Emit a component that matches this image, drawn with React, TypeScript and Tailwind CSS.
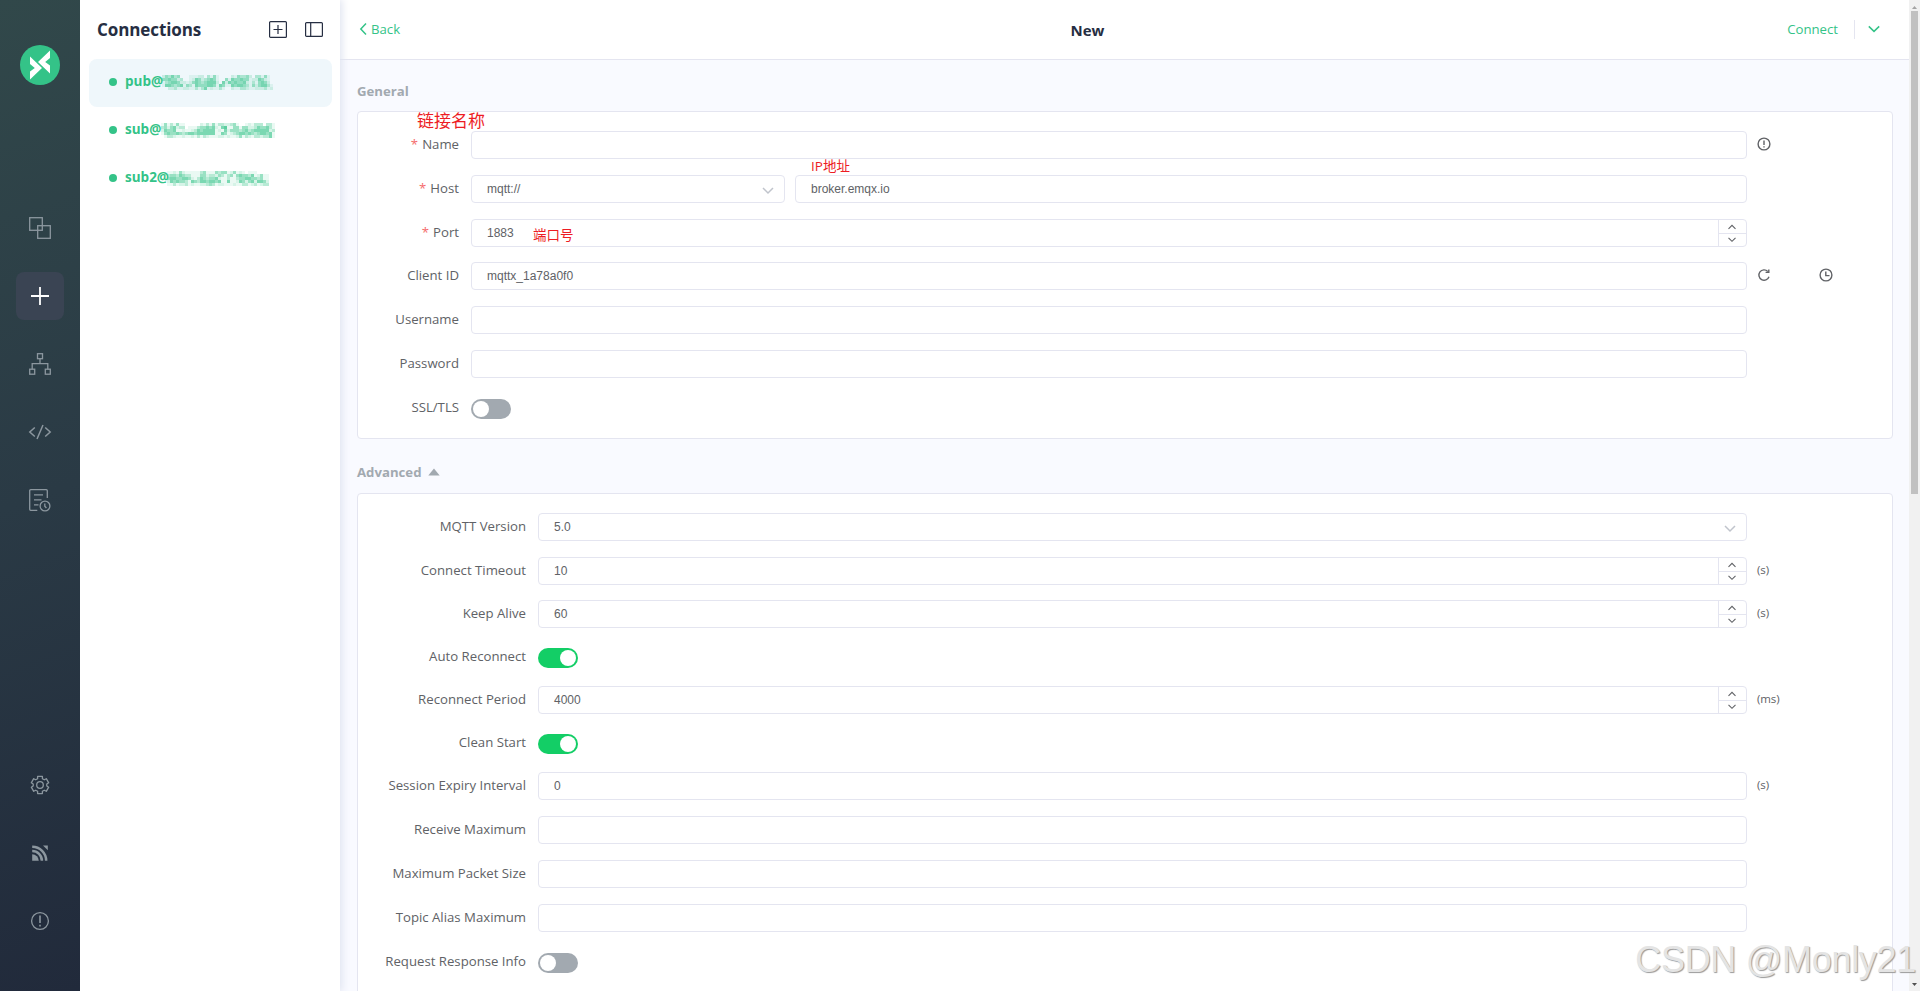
import React, { ReactNode } from 'react';

const UI_FONT = "font-['Open_Sans','Noto_Sans_CJK_SC',sans-serif]";
const INPUT_FONT = "font-['Liberation_Sans',Arial,sans-serif]";

// Each digit is one 3px block, 0 = empty, 5 = strongest
const connections = [
  {
    name: 'pub@',
    width: 'w-[37px]',
    blocks: [
      '2435340001112203141000021433420331410',
      '4454423001254234541004154454412254210',
      '1345542212454345552052545445213145420',
      '1554345143154445541541154554314245531',
      '0022311221131351211310021133211222312',
    ],
  },
  {
    name: 'sub@',
    width: 'w-[36px]',
    blocks: [
      '14131411000002131413322341001213330331',
      '34245233011134454521561144144223544531',
      '25445112112354555512152444345345555523',
      '14544543455455555511541234554543455451',
      '01332112112131321112212112413213323351',
    ],
  },
  {
    name: 'sub2@',
    width: 'w-[42px]',
    blocks: [
      '1121421111134111434412412101110000',
      '3443543311144233243134145443512411',
      '4554455421354344521131134455443411',
      '2545443154355455451151125424525542',
      '1131223121122343122111211331231233',
    ],
  },
];

const shades = ['', 'fill-[#34c388]/10', 'fill-[#34c388]/20', 'fill-[#34c388]/35', 'fill-[#34c388]/50', 'fill-[#34c388]/65', 'fill-[#34c388]/80'];

function Mosaic({ blocks }: { blocks: string[] }) {
  return (
    <svg width={blocks[0].length * 3} height="15" shapeRendering="crispEdges">
      {blocks.map((row, y) =>
        row.split('').map((v, x) =>
          v === '0' ? null : <rect key={`${x}-${y}`} x={x * 3} y={y * 3} width="3" height="3" className={shades[Number(v)]} />
        )
      )}
    </svg>
  );
}

function NavItem({ active, children }: { active?: boolean; children: ReactNode }) {
  return (
    <div
      className={`flex size-12 items-center justify-center rounded-lg ${
        active ? 'bg-[#3a4453] text-white' : 'text-[#8c979f]'
      }`}
    >
      <svg width="24" height="24" viewBox="0 0 24 24" fill="none" stroke="currentColor" strokeWidth="1.3">
        {children}
      </svg>
    </div>
  );
}

function Sidebar() {
  return (
    <div className="relative z-20 flex w-20 shrink-0 flex-col items-center bg-[linear-gradient(160deg,#31484a_0%,#2a3a45_50%,#212a3b_100%)] pt-[45px] pb-[46px]">
      <svg width="40" height="40" viewBox="0 0 40 40">
        <circle cx="20" cy="20" r="20" fill="#34c388" />
        <path d="M10 11.5 L22 23 L10 34.5 V26.5 L14.8 23 L10 19 Z" fill="#fff" />
        <path d="M30 5.5 L18 17 L30 28.5 V20.5 L25.2 17 L30 13 Z" fill="#fff" />
      </svg>

      <div className="mt-[119px] flex flex-col gap-5">
        <NavItem>
          <rect x="1.7" y="1.7" width="12.6" height="12.6" />
          <rect x="9.7" y="9.7" width="12.6" height="12.6" />
        </NavItem>
        <NavItem active>
          <path d="M12 3v18M3 12h18" strokeWidth="1.8" />
        </NavItem>
        <NavItem>
          <rect x="9.5" y="1.7" width="5" height="5" />
          <rect x="1.7" y="17.2" width="5" height="5" />
          <rect x="17.3" y="17.2" width="5" height="5" />
          <path d="M12 6.7v5M4.2 17.2v-5.5h15.6v5.5" />
        </NavItem>
        <NavItem>
          <path d="M6.8 7.5 L1.8 12 L6.8 16.5 M17.2 7.5 L22.2 12 L17.2 16.5 M15 5 L9 19" strokeWidth="1.5" />
        </NavItem>
        <NavItem>
          <path d="M9.3 22.3H2.7a1 1 0 0 1-1-1V2.7a1 1 0 0 1 1-1h15.6a1 1 0 0 1 1 1V10" />
          <path d="M6 6.8h9M6 11.8h7.5M6 16.8h4.5" />
          <circle cx="17" cy="18" r="4.9" />
          <path d="M16.8 15.5v2.7l1.6 1.8" />
        </NavItem>
      </div>

      <div className="mt-auto flex flex-col gap-5">
        <NavItem>
          <path d="M9.6 3.4h4.8v2.3l1.9 1.1 2-1.1 2.4 4.1-1.9 1.2v2l1.9 1.2-2.4 4.1-2-1.1-1.9 1.1v2.3H9.6v-2.3l-1.9-1.1-2 1.1-2.4-4.1L5.2 13v-2L3.3 9.8l2.4-4.1 2 1.1 1.9-1.1z" strokeLinejoin="round" />
          <circle cx="12" cy="12" r="3.3" />
        </NavItem>
        <NavItem>
          <path d="M4.2 13.2a6.6 6.6 0 0 1 6.6 6.6H4.2z" fill="currentColor" stroke="none" />
          <path d="M4.2 10.1a9.7 9.7 0 0 1 9.7 9.7M4.2 5.8a14 14 0 0 1 14 14" strokeWidth="2.5" />
          <path d="M15 4.4h4.8v4.8z" fill="currentColor" stroke="none" />
        </NavItem>
        <NavItem>
          <circle cx="12" cy="12" r="8.4" />
          <path d="M12 6.5v7.5M12 15.8v1.7" strokeWidth="1.6" />
        </NavItem>
      </div>
    </div>
  );
}

function ConnectionList() {
  return (
    <div className="z-10 w-[260px] shrink-0 bg-white shadow-[1px_0_8px_1px_#dfe3f0]">
      <div className="flex h-[59px] items-center pl-[17px] pr-[17px] text-[#262e42]">
        <h1 className="text-[17px] font-bold tracking-[-0.1px]">Connections</h1>
        <svg className="ml-auto" width="18" height="17" fill="none" stroke="currentColor" strokeWidth="1.2">
          <rect x="0.6" y="0.6" width="16.8" height="15.8" rx="1" />
          <path d="M9 4v9M4.5 8.5h9" />
        </svg>
        <svg className="ml-[18px]" width="18" height="15" fill="none" stroke="currentColor" strokeWidth="1.2">
          <rect x="0.6" y="0.6" width="16.8" height="13.8" rx="1" />
          <path d="M5.7 1v13" />
        </svg>
      </div>
      {connections.map((c, i) => (
        <div key={c.name} className={`ml-[9px] flex h-12 w-[243px] items-center rounded-lg pb-[2px] pl-5 ${i === 0 ? 'bg-[#eff7fb]' : ''}`}>
          <span className="size-2 rounded-full bg-[#34c388]" />
          <span className={`ml-2 whitespace-nowrap pb-[2px] text-[13.5px] font-bold leading-5 text-[#34c388] ${c.width}`}>{c.name}</span>
          <Mosaic blocks={c.blocks} />
        </div>
      ))}
    </div>
  );
}

function Chevron({ className, d, thin }: { className?: string; d: string; thin?: boolean }) {
  return (
    <svg className={className} width="14" height="14" viewBox="0 0 14 14" fill="none" stroke="currentColor" strokeWidth={thin ? 1.1 : 1.5}>
      <path d={d} />
    </svg>
  );
}

function Input({ value, spinner, select, className = 'flex-1' }: { value?: string; spinner?: boolean; select?: boolean; className?: string }) {
  return (
    <div className={`flex h-7 rounded border border-[#e4e5f0] bg-white ${className}`}>
      <span className={`flex-1 pl-[15px] text-[12px] leading-[26px] text-[#606266] ${INPUT_FONT}`}>{value}</span>
      {select && <Chevron className="mt-[8px] mr-[9px] text-[#c0c4cc]" d="M2 4l5 5 5-5" />}
      {spinner && (
        <span className="flex w-[28px] flex-col border-l border-[#e4e5f0] pr-px text-[#606266]">
          <span className="-mr-px flex h-[14px] items-center justify-center border-b border-[#e4e5f0] pr-px">
            <Chevron thin d="M3.5 8.8L7 5.3 10.5 8.8" />
          </span>
          <span className="flex h-3 items-center justify-center">
            <Chevron thin d="M3.5 4.8L7 8.3 10.5 4.8" />
          </span>
        </span>
      )}
    </div>
  );
}

function Switch({ on }: { on?: boolean }) {
  return (
    <div className={`mt-[5px] flex h-5 w-10 items-center rounded-full px-[2px] ${on ? 'justify-end bg-[#13ce66]' : 'bg-[#a2a9b0]'}`}>
      <span className="size-4 rounded-full bg-white" />
    </div>
  );
}

type RowProps = { label: string; required?: boolean; short?: boolean; wide?: boolean; suffix?: ReactNode; children: ReactNode };

function Row({ label, required, short, wide, suffix, children }: RowProps) {
  return (
    <div className={`flex items-start ${short ? 'h-[43px]' : 'h-11'}`}>
      <label className={`shrink-0 whitespace-nowrap pr-3 text-right text-[13.2px] leading-[27px] text-[#606266] ${wide ? 'w-[180px]' : 'w-[113px]'}`}>
        {required && <span className="mr-1 text-[#f56c6c]">*</span>}
        {label}
      </label>
      <div className="flex flex-1">{children}</div>
      <div className="flex h-[25px] w-[145px] shrink-0 items-center pl-[10px] text-[11.5px] tracking-[-0.1px] text-[#606266]">{suffix}</div>
    </div>
  );
}

const iconProps = { width: 14, height: 14, viewBox: '0 0 14 14', fill: 'none', stroke: '#606266', strokeWidth: 1.4 };

function GeneralCard() {
  return (
    <div className="relative h-[328px] rounded border border-[#e4e5f0] bg-white pt-[19px]">
      <Row
        label="Name"
        required
        suffix={
          <svg {...iconProps}>
            <circle cx="7" cy="7" r="5.9" />
            <path d="M7 3.5v4.5M7 9.2v1.3" />
          </svg>
        }
      >
        <Input />
      </Row>
      <Row label="Host" required>
        <Input value="mqtt://" select className="w-[314px]" />
        <Input value="broker.emqx.io" className="ml-[10px] flex-1" />
      </Row>
      <Row label="Port" required short>
        <Input value="1883" spinner />
      </Row>
      <Row
        label="Client ID"
        suffix={
          <>
            <svg {...iconProps}>
              <path d="M12 8.8A5.2 5.2 0 1 1 10.8 3.4" />
              <path d="M8.6 4.4h3.2V1.5" />
            </svg>
            <svg {...iconProps} className="ml-[48px]">
              <circle cx="7" cy="7" r="5.9" />
              <path d="M6.8 3.6v4h3.7" />
            </svg>
          </>
        }
      >
        <Input value="mqttx_1a78a0f0" />
      </Row>
      <Row label="Username">
        <Input />
      </Row>
      <Row label="Password">
        <Input />
      </Row>
      <Row label="SSL/TLS">
        <Switch />
      </Row>

      {/* Red hints written over the form */}
      <span className="absolute left-[59px] top-[-3px] text-[17px] leading-6 text-[#ed1c24]">链接名称</span>
      <span className="absolute left-[453px] top-[44px] text-[13.5px] leading-5 text-[#ed1c24]">IP地址</span>
      <span className="absolute left-[175px] top-[113px] text-[13.5px] leading-5 text-[#ed1c24]">端口号</span>
    </div>
  );
}

function AdvancedCard() {
  return (
    <div className="h-[600px] rounded border border-[#e4e5f0] bg-white pt-[19px]">
      <Row wide label="MQTT Version">
        <Input value="5.0" select />
      </Row>
      <Row wide short label="Connect Timeout" suffix="(s)">
        <Input value="10" spinner />
      </Row>
      <Row wide short label="Keep Alive" suffix="(s)">
        <Input value="60" spinner />
      </Row>
      <Row wide short label="Auto Reconnect">
        <Switch on />
      </Row>
      <Row wide short label="Reconnect Period" suffix="(ms)">
        <Input value="4000" spinner />
      </Row>
      <Row wide short label="Clean Start">
        <Switch on />
      </Row>
      <Row wide label="Session Expiry Interval" suffix="(s)">
        <Input value="0" />
      </Row>
      <Row wide label="Receive Maximum">
        <Input />
      </Row>
      <Row wide label="Maximum Packet Size">
        <Input />
      </Row>
      <Row wide label="Topic Alias Maximum">
        <Input />
      </Row>
      <Row wide label="Request Response Info">
        <Switch />
      </Row>
    </div>
  );
}

function Header() {
  return (
    <div className="flex h-[60px] shrink-0 items-center border-b border-[#e4e5f0] bg-white text-[13.2px] text-[#34c388]">
      <div className="flex flex-1 items-center pl-[17px]">
        <Chevron d="M9 1.5L3.8 7 9 12.5" />
        <span className="pt-px">Back</span>
      </div>
      <h2 className="pr-[63px] pt-px text-[15px] font-bold text-[#262e42]">New</h2>
      <div className="flex flex-1 items-center justify-end pr-[28px]">
        <span className="pt-px">Connect</span>
        <span className="ml-4 h-[19px] w-px bg-[#e4e5f0]" />
        <Chevron className="ml-[12px]" d="M1.8 4.4L7 9.4 12.2 4.4" />
      </div>
    </div>
  );
}

function Scrollbar() {
  return (
    <div className="flex w-[11px] shrink-0 flex-col items-center bg-[#f1f1f1]">
      <div className="flex h-[11px] items-center">
        <svg width="5" height="3" className="mt-[3px]">
          <path d="M0 3L2.5 0 5 3z" fill="#a3a3a3" />
        </svg>
      </div>
      <div className="h-[483px] w-[7px] bg-[#c1c1c1]" />
      <svg width="5" height="3" className="mt-auto mb-[5px]">
        <path d="M0 0h5L2.5 3z" fill="#505050" />
      </svg>
    </div>
  );
}

export default function App() {
  return (
    <div className={`relative flex h-screen w-full overflow-hidden bg-[#f9faff] ${UI_FONT}`}>
      <Sidebar />
      <ConnectionList />
      <div className="flex min-w-0 flex-1 flex-col">
        <Header />
        <div className="flex-1 pl-[17px] pr-4 pt-[21px]">
          <h3 className="mb-[10px] text-[13.2px] font-bold leading-5 text-[#a2a9b0]">General</h3>
          <GeneralCard />
          <h3 className="mb-[11px] mt-[23px] flex items-center text-[13.2px] font-bold leading-5 text-[#a2a9b0]">
            Advanced
            <svg className="ml-[6px]" width="12" height="8">
              <path d="M0.3 7.6L6 0.6 11.7 7.6z" fill="#a2a9b0" />
            </svg>
          </h3>
          <AdvancedCard />
        </div>
      </div>
      <Scrollbar />
      <div className="absolute bottom-[11px] right-[4px] whitespace-nowrap font-['Liberation_Sans',Arial,sans-serif] text-[36px] leading-10 tracking-[-0.3px] text-[#e4e4e4] [text-shadow:1px_1px_1px_#999]">
        CSDN @Monly21
      </div>
    </div>
  );
}
